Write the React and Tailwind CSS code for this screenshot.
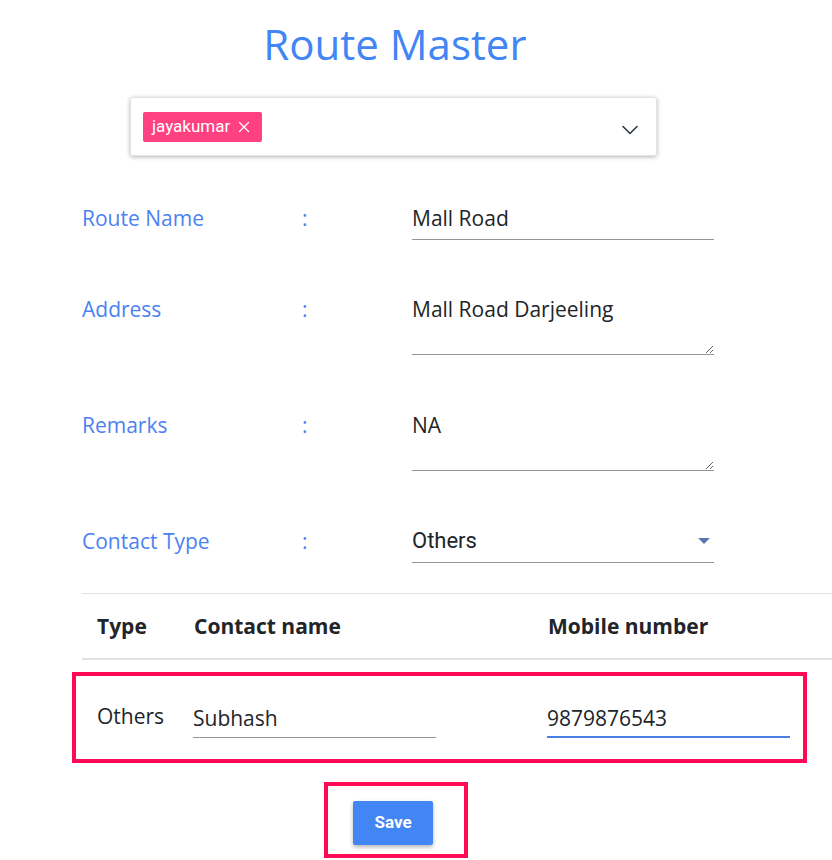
import { ChevronDown, X } from "lucide-react";

const seg = { fontFamily: '"Open Sans", "Noto Sans", sans-serif' };
const rob = { fontFamily: 'Roboto, "Noto Sans", sans-serif' };

function Label({ children }) {
  return (
    <div className="flex w-[330px] shrink-0 pt-[8px] text-[21px] leading-[28px] text-[#4b82f1]">
      <span className="w-[220px]">{children}</span>
      <span>:</span>
    </div>
  );
}

function Area({ value }) {
  return (
    <textarea
      readOnly
      rows={2}
      value={value}
      className="block h-[68px] w-[302px] border-b border-[#949494] pt-[8px] pb-[3px] text-[21px] leading-[28px] text-[#212529] outline-none"
      style={seg}
    />
  );
}

export default function App() {
  return (
    <main className="min-h-[860px] w-[832px] overflow-hidden bg-white" style={seg}>
      <h1 className="mt-[20px] ml-[-42px] text-center text-[42px] leading-[48px] text-[#4285f4]">
        Route Master
      </h1>

      <div className="mt-[29px] ml-[130px] flex h-[59px] w-[527px] items-center justify-between rounded-[3px] border border-[#e3e3e3] pl-[12px] pr-[12px] shadow-[0_1px_4px_rgba(0,0,0,0.3)]">
        <span
          className="flex h-[30px] items-center gap-[5px] rounded-[2px] bg-[#ff4081] pl-[9px] pr-[9px] text-[17px] text-white"
          style={rob}
        >
          jayakumar
          <X size={18} strokeWidth={1.6} />
        </span>
        <ChevronDown size={28} strokeWidth={1.3} className="mt-[6px] text-[#2a3441]" />
      </div>

      <div className="ml-[82px] mt-[40px] flex">
        <Label>Route Name</Label>
        <div className="w-[302px] border-b border-[#949494] pt-[8px] pb-[7px] text-[21px] leading-[28px] text-[#212529]">
          Mall Road
        </div>
      </div>

      <div className="ml-[82px] mt-[47px] flex">
        <Label>Address</Label>
        <Area value="Mall Road Darjeeling" />
      </div>

      <div className="ml-[82px] mt-[48px] flex">
        <Label>Remarks</Label>
        <Area value="NA" />
      </div>

      <div className="ml-[82px] mt-[48px] flex">
        <Label>Contact Type</Label>
        <div
          className="flex w-[302px] items-center justify-between border-b border-[#949494] pt-[8px] pb-[7px] text-[22px] leading-[28px] text-[#212529]"
          style={rob}
        >
          Others
          <svg width="12" height="6" viewBox="0 0 12 6" className="mr-[4px]">
            <path d="M0 0h12L6 6z" fill="#5a78b0" />
          </svg>
        </div>
      </div>

      <div className="ml-[82px] mt-[30px] w-[760px] border-t border-[#dee2e6]">
        <div className="grid h-[66px] grid-cols-[97px_354px_1fr] items-center border-b-2 border-[#dee2e6] pl-[15px] pt-[2px] text-[21px] font-bold text-[#212529]">
          <span>Type</span>
          <span>Contact name</span>
          <span>Mobile number</span>
        </div>
      </div>

      <div className="ml-[72px] mt-[12px] h-[91px] w-[735px] border-4 border-[#ff0a54] pl-[21px]">
        <div className="grid h-full grid-cols-[96px_354px_243px] items-center text-[21px] text-[#212529]">
          <span className="mt-[-2px]">Others</span>
          <div className="mt-[6px] w-[243px] border-b border-[#949494] pb-[5px] leading-[28px]">Subhash</div>
          <div className="mt-[6px] w-[243px] border-b-[2px] border-[#4a7fe6] pb-[4px] leading-[28px]">9879876543</div>
        </div>
      </div>

      <div className="ml-[324px] mt-[19px] flex h-[76px] w-[144px] items-start border-4 border-[#ff0a54] pl-[25px] pt-[15px]">
        <button
          className="h-[44px] w-[80px] rounded-[2px] bg-[#4285f4] text-[17px] font-bold text-white shadow-[0_2px_4px_rgba(0,0,0,0.3)]"
          style={rob}
        >
          Save
        </button>
      </div>
    </main>
  );
}
